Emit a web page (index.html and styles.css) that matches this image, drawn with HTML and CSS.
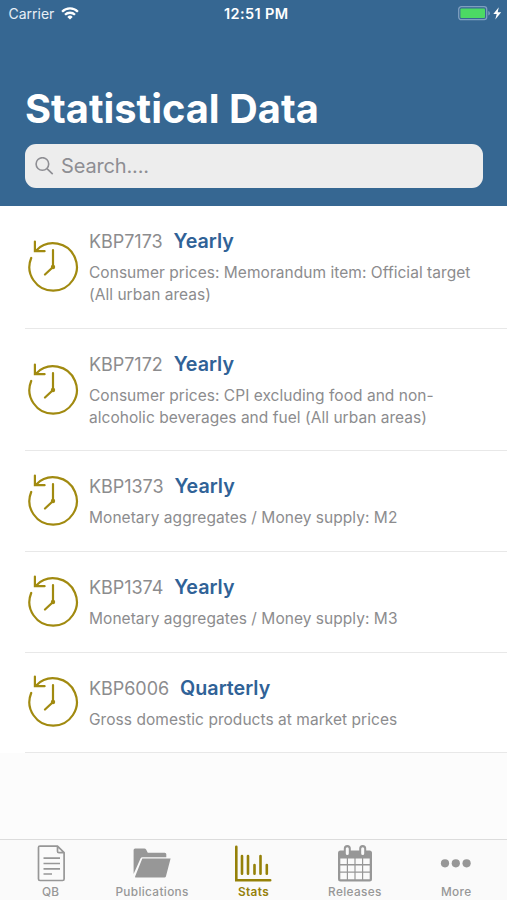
FILE: index.html
```html
<!DOCTYPE html>
<html lang="en">
<head>
<meta charset="utf-8">
<title>Statistical Data</title>
<link rel="stylesheet" href="styles.css">
</head>
<body>
<svg class="defs" width="0" height="0" aria-hidden="true">
  <symbol id="history" viewBox="0 0 52 54">
    <path d="M4.2 18A23.7 23.7 0 1 0 9.2 10.4M7.9 1.6V11.2H17.6M26 10V27L18 34.5" fill="none" stroke="currentColor" stroke-width="2.2" stroke-linecap="round"/>
    <circle cx="26" cy="27" r="2.2" fill="currentColor"/>
  </symbol>
</svg>
<div class="screen">
  <header class="header">
    <div class="status">
      <div class="carrier"><span class="carrier-name">Carrier</span>
        <svg class="wifi" width="18" height="13" viewBox="0 0 18 13" fill="none" stroke="#fff" stroke-width="2.3"><path d="M1.1 4.7a11.2 11.2 0 0 1 15.8 0M4 7.8a7.1 7.1 0 0 1 10 0"/><path d="M9 12.6 6.3 9.9a3.8 3.8 0 0 1 5.4 0z" fill="#fff" stroke="none"/></svg>
      </div>
      <div class="clock">12:51 PM</div>
      <svg class="battery" width="44" height="15" viewBox="0 0 44 15"><rect x=".7" y=".7" width="28" height="13" rx="2.6" fill="none" stroke="#7f9fc0" stroke-width="1.3"/><rect x="2.4" y="2.4" width="24.6" height="9.6" rx="1" fill="#4cd964"/><path d="M30.3 5v4.6q1.6-.6 1.6-2.3T30.3 5z" fill="#7f9fc0"/><path d="M40.8 1.2 35.3 8h3.4l-1.4 5.4L43.2 6.2h-3.5z" fill="#fff"/></svg>
    </div>
    <h1 class="title">Statistical Data</h1>
    <div class="search">
      <svg width="19" height="19" viewBox="0 0 19 19" fill="none" stroke="#8e8e93" stroke-width="1.6"><circle cx="7.4" cy="7" r="6.3"/><path d="m12 11.6 5.7 5.5"/></svg>
      <span class="placeholder">Search....</span>
    </div>
  </header>
  <main class="list">
    <article class="row tall"><svg class="history"><use href="#history"/></svg><div class="text"><div class="head"><span class="code">KBP7173</span><span class="freq">Yearly</span></div><p class="desc">Consumer prices: Memorandum item: Official target<br>(All urban areas)</p></div></article>
    <article class="row tall"><svg class="history"><use href="#history"/></svg><div class="text"><div class="head"><span class="code">KBP7172</span><span class="freq">Yearly</span></div><p class="desc">Consumer prices: CPI excluding food and non-<br>alcoholic beverages and fuel (All urban areas)</p></div></article>
    <article class="row"><svg class="history"><use href="#history"/></svg><div class="text"><div class="head"><span class="code">KBP1373</span><span class="freq">Yearly</span></div><p class="desc">Monetary aggregates / Money supply: M2</p></div></article>
    <article class="row"><svg class="history"><use href="#history"/></svg><div class="text"><div class="head"><span class="code">KBP1374</span><span class="freq">Yearly</span></div><p class="desc">Monetary aggregates / Money supply: M3</p></div></article>
    <article class="row"><svg class="history"><use href="#history"/></svg><div class="text"><div class="head"><span class="code">KBP6006</span><span class="freq">Quarterly</span></div><p class="desc">Gross domestic products at market prices</p></div></article>
  </main>
  <nav class="tabs">
    <div class="tab"><svg width="38" height="38" viewBox="0 0 38 38" fill="none" stroke="currentColor" stroke-width="1.7"><path d="M8 1.1H25.5l6.6 6.6V34q0 1.5-1.5 1.5H8q-1.5 0-1.5-1.5V2.6q0-1.5 1.5-1.5zM25.5 1.1v5.1q0 1.5 1.5 1.5h5.1M11.5 13.1H28M11.5 18.5H28M11.5 23.8H28M11.5 29H20"/></svg><span>QB</span></div>
    <div class="tab"><svg width="38" height="38" viewBox="0 0 38 38" fill="currentColor"><path d="M.6 29V4.9q0-1.5 1.5-1.5h9.2q1.2 0 1.8 1.1l1.7 3.2h17q1.5 0 1.5 1.5v3H9.5q-1.5 0-2 1.4z"/><path d="M9.3 13.5H37.6L32.9 31.6q-.4 1-1.5 1H2.6q-.9 0-.5-1z"/></svg><span>Publications</span></div>
    <div class="tab active"><svg width="38" height="38" viewBox="0 0 38 38" fill="none" stroke="currentColor" stroke-width="2.6" stroke-linecap="round"><path d="M2.3 1.7V35.2H36.2M8 11v17.8M14 11v17.8M20.5 20v8.8M26.5 11v17.8M32.8 20v8.8"/></svg><span>Stats</span></div>
    <div class="tab"><svg width="38" height="38" viewBox="0 0 38 38"><rect x="2" y="5.5" width="34" height="31" rx="2.5" fill="currentColor"/><path d="M4.3 13.5h6.5V19H4.3zM12 13.5h6.4V19H12zM19.6 13.5H26V19h-6.4zM27.2 13.5h6.5V19h-6.5zM4.3 20.4h6.5v6H4.3zM12 20.4h6.4v6H12zM19.6 20.4H26v6h-6.4zM27.2 20.4h6.5v6h-6.5zM4.3 27.8h6.5v6.4H4.3zM12 27.8h6.4v6.4H12zM19.6 27.8H26v6.4h-6.4zM27.2 27.8h6.5v6.4h-6.5z" fill="#fafafa"/><path d="M11.3 3.6v5M26.7 3.6v5" stroke="currentColor" stroke-width="7" stroke-linecap="round"/><path d="M11.3 3.8v4.6M26.7 3.8v4.6" stroke="#fafafa" stroke-width="3" stroke-linecap="round"/></svg><span>Releases</span></div>
    <div class="tab"><svg width="38" height="38" viewBox="0 0 38 38" fill="currentColor"><circle cx="8" cy="18.3" r="4.1"/><circle cx="18.8" cy="18.3" r="4.1"/><circle cx="29.6" cy="18.3" r="4.1"/></svg><span>More</span></div>
  </nav>
</div>
</body>
</html>
```
FILE: styles.css
```css
* { box-sizing: border-box; }
body { margin: 0; font-family: Inter, "Liberation Sans", sans-serif; }
.defs { display: none; }
.screen { width: 507px; height: 900px; display: flex; flex-direction: column; background: #fcfcfc; overflow: hidden; }
.header { height: 206.4px; flex: none; background: #366792; color: #fff; }
.status { height: 27px; padding: 0 5px 0 8.5px; display: grid; grid-template-columns: 1fr auto 1fr; align-items: center; }
.carrier { display: flex; align-items: center; gap: 7px; font-size: 14px; color: #e8eff6; }
.clock { font-size: 14.5px; font-weight: 600; letter-spacing: 0.4px; position: relative; left: 1px; }
.battery { justify-self: end; }
.title { margin: 58px 0 0 25px; font-size: 39.8px; line-height: 48px; font-weight: 700; white-space: nowrap; }
.search { margin: 11px 24px 0 25px; height: 44px; padding-left: 10px; display: flex; align-items: center; gap: 7px; border-radius: 11px; background: #ededed; color: #8e8e93; }
.placeholder { font-size: 20px; line-height: 24px; letter-spacing: -0.15px; }
.list { flex: none; background: #fff; }
.row { height: 100.6px; display: flex; padding-left: 26px; background: linear-gradient(#e8e8e8, #e8e8e8) 25px 100% / 100% 1px no-repeat; }
.row.tall { height: 122.5px; }
.history { width: 52px; height: 54px; flex: none; align-self: center; color: #a18a10; }
.text { padding: 22px 0 0 11px; }
.head { display: flex; gap: 11px; height: 26px; line-height: 26px; }
.code { font-size: 18px; line-height: 28px; letter-spacing: -0.05px; color: #8c8c8e; }
.freq { font-size: 19.7px; font-weight: 600; color: #306297; }
.desc { margin: 8px 0 0; font-size: 15.5px; line-height: 22px; letter-spacing: 0.04px; color: #8c8c8e; white-space: nowrap; }
.tabs { height: 61px; flex: none; margin-top: auto; display: grid; grid-template-columns: repeat(5, 1fr); border-top: 1px solid #dcdcdc; background: #fafafa; }
.tab { display: flex; flex-direction: column; align-items: center; padding-top: 5px; color: #979797; font-size: 11.8px; line-height: 16px; font-weight: 500; letter-spacing: 0.36px; }
.tab svg { flex: none; }
.tab span { margin-top: 1px; }
.active { color: #958109; font-weight: 600; }
.row .history { margin: -1px -0.5px 0 0.5px; }
```
